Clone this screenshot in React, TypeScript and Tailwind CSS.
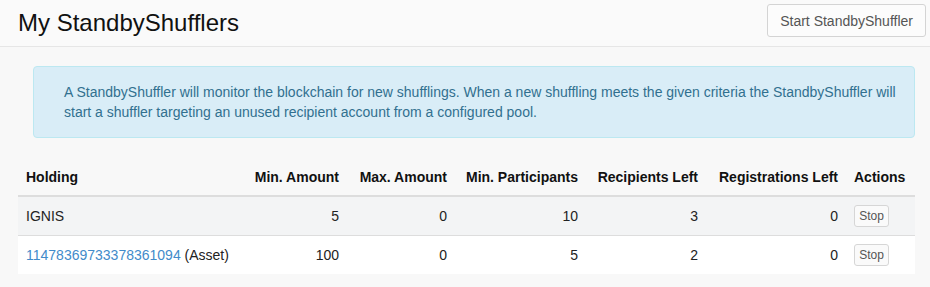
const rows = [
  { holding: "IGNIS", asset: false, min: "5", max: "0", part: "10", recip: "3", reg: "0" },
  { holding: "11478369733378361094", asset: true, min: "100", max: "0", part: "5", recip: "2", reg: "0" },
];

export default function App() {
  return (
    <div className="min-h-[287px] bg-[#f8f8f8] font-['Liberation_Sans',Arial,sans-serif] text-[14px] leading-5 text-[#222]">
      {/* Page header */}
      <div className="flex h-[47px] items-start justify-between border-b border-[#e6e6e6] bg-[#fafafa] pl-[18px] pr-[4px]">
        <h1 className="mt-[10px] text-[24px] leading-[26px] text-[#111]">My StandbyShufflers</h1>
        <button className="mt-[4px] h-[33px] rounded-[3px] border border-[#d4d4d4] bg-[#fcfcfc] px-[12px] text-[14px] leading-5 text-[#555]">
          Start StandbyShuffler
        </button>
      </div>

      <div className="pl-[18px] pr-[15px] pt-[19px]">
        {/* Info alert */}
        <div className="ml-[15px] rounded-[4px] border border-[#bce8f1] bg-[#d9edf7] py-[15px] pl-[30px] pr-[15px] text-[#31708f]">
          A StandbyShuffler will monitor the blockchain for new shufflings. When a new shuffling meets the given criteria the
          StandbyShuffler will start a shuffler targeting an unused recipient account from a configured pool.
        </div>

        {/* Table */}
        <table className="mt-[21px] w-[897px] table-fixed border-collapse">
          <colgroup>
            <col className="w-[227px]" />
            <col className="w-[102px]" />
            <col className="w-[108px]" />
            <col className="w-[131px]" />
            <col className="w-[120px]" />
            <col className="w-[140px]" />
            <col className="w-[69px]" />
          </colgroup>
          <thead>
            <tr className="border-b-2 border-[#dddddd] font-bold text-[#111]">
              <th className="whitespace-nowrap px-2 py-2 text-left">Holding</th>
              <th className="whitespace-nowrap px-2 py-2 text-right">Min. Amount</th>
              <th className="whitespace-nowrap px-2 py-2 text-right">Max. Amount</th>
              <th className="whitespace-nowrap px-2 py-2 text-right">Min. Participants</th>
              <th className="whitespace-nowrap px-2 py-2 text-right">Recipients Left</th>
              <th className="whitespace-nowrap px-2 py-2 text-right">Registrations Left</th>
              <th className="whitespace-nowrap px-2 py-2 text-left">Actions</th>
            </tr>
          </thead>
          <tbody>
            {rows.map((r, i) => (
              <tr key={i} className={i % 2 === 0 ? "bg-[#f3f4f5]" : "border-t border-[#dddddd] bg-white"}>
                <td className="whitespace-nowrap px-2 py-2 align-middle">
                  {r.asset ? (
                    <>
                      <a className="text-[#428bca]">{r.holding}</a> (Asset)
                    </>
                  ) : (
                    r.holding
                  )}
                </td>
                <td className="px-2 py-2 text-right align-middle">{r.min}</td>
                <td className="px-2 py-2 text-right align-middle">{r.max}</td>
                <td className="px-2 py-2 text-right align-middle">{r.part}</td>
                <td className="px-2 py-2 text-right align-middle">{r.recip}</td>
                <td className="px-2 py-2 text-right align-middle">{r.reg}</td>
                <td className="px-2 py-2 align-middle">
                  <button className="flex h-[22px] w-[35px] items-center justify-center rounded-[3px] border border-[#d6d6d6] bg-[#fafafa] text-[12px] text-[#555]">
                    Stop
                  </button>
                </td>
              </tr>
            ))}
          </tbody>
        </table>
      </div>
    </div>
  );
}
